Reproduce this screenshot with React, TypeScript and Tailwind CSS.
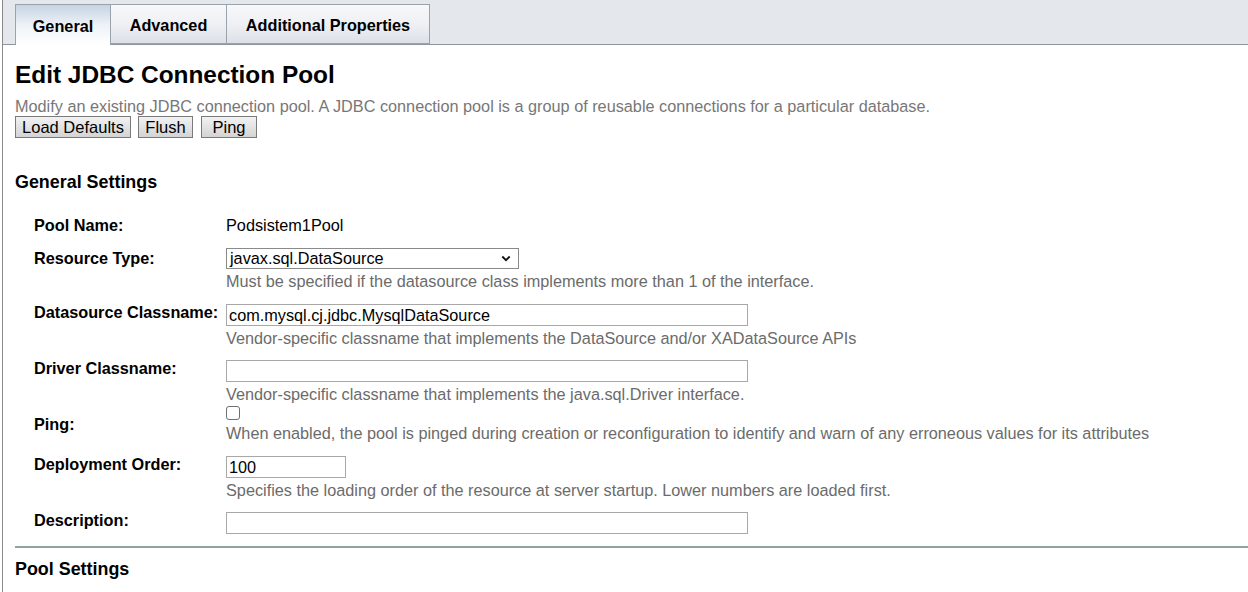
import React from "react";

const font = { fontFamily: '"Liberation Sans", Arial, sans-serif' };

function Row({
  label,
  labelCls,
  children,
  mt,
}: {
  label: string;
  labelCls: string;
  children: React.ReactNode;
  mt: string;
}) {
  return (
    <div className={`flex items-start ${mt}`}>
      <div className={`w-[211px] shrink-0 pl-[19px] font-bold text-[16.25px] leading-[19px] text-black whitespace-nowrap ${labelCls}`}>
        {label}
      </div>
      <div className="flex flex-col">{children}</div>
    </div>
  );
}

function Help({ children }: { children: React.ReactNode }) {
  return <div className="text-[16.25px] leading-[19px] text-[#6b6b6b] whitespace-nowrap">{children}</div>;
}

function TextBox({ value, w }: { value: string; w: string }) {
  return (
    <div className={`${w} h-[22px] border border-[#a8a8a8] bg-white px-[2px] text-[16.25px] leading-[20px] text-black`}>
      {value}
    </div>
  );
}

export default function App() {
  return (
    <div className="w-[1248px] h-[592px] overflow-hidden bg-white pl-[2px]" style={font}>
      <div className="h-full border-l border-[#8a8a8a]">
        {/* Tab bar */}
        <div className="h-[45px] bg-[#e4e7ec] border-b border-[#8d96a0] flex items-end pl-[12px]">
          <div className="flex h-[41px] -mb-px">
            <div className="w-[96px] h-[41px] border border-b-0 border-[#9aa2ab] bg-gradient-to-b from-[#c5d3e2] via-[#eef2f7] to-white flex items-center justify-center pt-[3px] font-bold text-[16.25px] text-black">
              General
            </div>
            <div className="w-[116px] h-[40px] border border-l-0 border-[#9aa2ab] bg-gradient-to-b from-[#f7f8fa] via-[#eef0f4] to-[#dde1e7] flex items-center justify-center pt-[2px] font-bold text-[16.25px] text-black">
              Advanced
            </div>
            <div className="w-[203px] h-[40px] border border-l-0 border-[#9aa2ab] bg-gradient-to-b from-[#f7f8fa] via-[#eef0f4] to-[#dde1e7] flex items-center justify-center pt-[2px] font-bold text-[16.25px] text-black">
              Additional Properties
            </div>
          </div>
        </div>

        <div className="pl-[12px] pt-[16px]">
          <h1 className="font-bold text-[24.4px] leading-[28px] text-black">Edit JDBC Connection Pool</h1>
          <div className="mt-[8px] text-[16.25px] leading-[19px] text-[#777] whitespace-nowrap">
            Modify an existing JDBC connection pool. A JDBC connection pool is a group of reusable connections for a particular database.
          </div>
          <div className="flex gap-[7px]">
            {[
              ["Load Defaults", "w-[116px]"],
              ["Flush", "w-[55px] mr-[1px]"],
              ["Ping", "w-[56px]"],
            ].map(([t, w]) => (
              <div
                key={t}
                className={`${w} h-[22px] border border-[#7a7a7a] bg-gradient-to-b from-[#f2f2f2] to-[#d4d4d4] flex items-center justify-center pb-[1px] text-[16.5px] leading-[20px] text-black`}
              >
                {t}
              </div>
            ))}
          </div>

          <div className="mt-[34px] font-bold text-[17.9px] leading-[21px] text-black">General Settings</div>

          <div className="mt-[23px]">
            <Row label="Pool Name:" labelCls="" mt="">
              <div className="text-[16.25px] leading-[19px] text-black">Podsistem1Pool</div>
            </Row>
            <Row label="Resource Type:" labelCls="pt-[1px]" mt="mt-[13px]">
              <div className="w-[293px] h-[21px] border border-[#8a8a8a] bg-white pl-[3px] pr-[7px] flex items-center justify-between text-[16.25px] text-black">
                <span>javax.sql.DataSource</span>
                <svg width="10" height="7" viewBox="0 0 10 7" fill="none">
                  <path d="M1.3 1.5 L5 5.2 L8.7 1.5" stroke="#111" strokeWidth="1.8" />
                </svg>
              </div>
              <div className="mt-[3px]">
                <Help>Must be specified if the datasource class implements more than 1 of the interface.</Help>
              </div>
            </Row>
            <Row label="Datasource Classname:" labelCls="-mt-[1px]" mt="mt-[13px]">
              <TextBox value="com.mysql.cj.jdbc.MysqlDataSource" w="w-[522px]" />
              <div className="mt-[3px]">
                <Help>Vendor-specific classname that implements the DataSource and/or XADataSource APIs</Help>
              </div>
            </Row>
            <Row label="Driver Classname:" labelCls="-mt-[1px]" mt="mt-[12px]">
              <TextBox value="" w="w-[522px]" />
              <div className="mt-[3px]">
                <Help>Vendor-specific classname that implements the java.sql.Driver interface.</Help>
              </div>
            </Row>
            <Row label="Ping:" labelCls="pt-[9px]" mt="mt-[2px]">
              <div className="w-[14px] h-[14px] border border-[#6f6f6f] rounded-[3px] bg-white" />
              <div className="mt-[4px]">
                <Help>When enabled, the pool is pinged during creation or reconfiguration to identify and warn of any erroneous values for its attributes</Help>
              </div>
            </Row>
            <Row label="Deployment Order:" labelCls="-mt-[1px]" mt="mt-[13px]">
              <TextBox value="100" w="w-[120px]" />
              <div className="mt-[3px]">
                <Help>Specifies the loading order of the resource at server startup. Lower numbers are loaded first.</Help>
              </div>
            </Row>
            <Row label="Description:" labelCls="-mt-[1px]" mt="mt-[12px]">
              <TextBox value="" w="w-[522px]" />
            </Row>
          </div>

          <div className="mt-[12px] h-[2px] bg-[#8fa3a0]" />
          <div className="mt-[11px] font-bold text-[17.9px] leading-[21px] text-black">Pool Settings</div>
        </div>
      </div>
    </div>
  );
}
